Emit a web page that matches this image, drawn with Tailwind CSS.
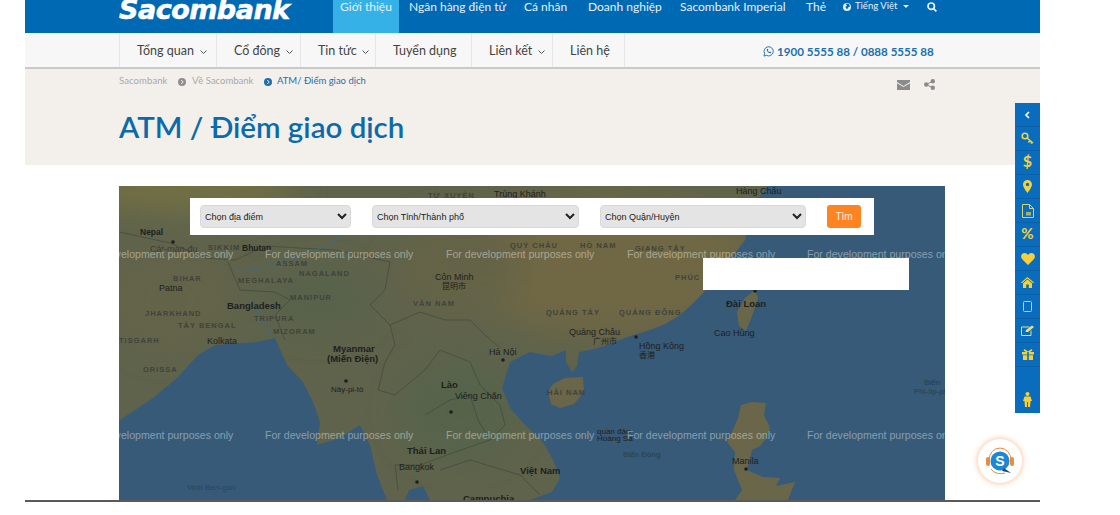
<!DOCTYPE html>
<html lang="vi">
  <head>
    <meta charset="UTF-8" />
    <meta name="viewport" content="width=device-width, initial-scale=1.0" />
    <title>ATM / Điểm giao dịch</title>
    <script src="https://cdn.jsdelivr.net/npm/@tailwindcss/browser@4"></script>
  </head>
  <body class="relative h-[515px] w-[1120px] overflow-hidden bg-white font-['Lato','Noto_Sans',sans-serif]">
    <div class="ml-[25px] w-[1015px]">
      <!-- top bar -->
      <header class="flex h-[33px] overflow-hidden whitespace-nowrap bg-[#0069b4] pl-[94px] text-[12px] text-[#e6f1f8]">
        <a class="-mt-[8px] w-[214px] font-['DejaVu_Sans',sans-serif] text-[27px] leading-[36px] font-bold tracking-[-0.5px] text-white italic [-webkit-text-stroke:0.6px_white]">Sacombank</a>
        <nav class="flex h-[33px]">
          <a class="w-[66px] bg-[#35b1e8] text-center leading-[13px]">Giới thiệu</a>
          <a class="ml-[10px] w-[98px] leading-[13px]">Ngân hàng điện tử</a>
          <a class="ml-[17px] w-[45px] leading-[13px]">Cá nhân</a>
          <a class="ml-[19px] w-[73px] leading-[13px]">Doanh nghiệp</a>
          <a class="ml-[19px] w-[107px] leading-[13px]">Sacombank Imperial</a>
          <a class="ml-[19px] w-[19px] leading-[13px]">Thẻ</a>
          <a class="ml-[18px] flex h-[13px] w-[66px] items-center text-[9.5px]">
            <svg class="mr-[4px] h-[8px] w-[8px] shrink-0" viewBox="0 0 10 10"><circle cx="5" cy="5" r="5" fill="#e6f1f8" /><path d="M3 1 5 3 3 5 5 8 7 5 9 4 7 1Z" fill="#0069b4" /></svg>
            Tiếng Việt
            <svg class="ml-[6px] h-[3px] w-[6px] shrink-0" viewBox="0 0 6 3"><path d="M0 0h6L3 3Z" fill="#e6f1f8" /></svg>
          </a>
          <a class="ml-[18px] flex h-[13px] items-center">
            <svg class="h-[10px] w-[10px]" viewBox="0 0 10 10" fill="none" stroke="#e6f1f8" stroke-width="1.7"><circle cx="4.2" cy="4.2" r="3.2" /><path d="m6.6 6.6 2.8 2.8" /></svg>
          </a>
        </nav>
      </header>

      <!-- sub nav -->
      <div class="flex h-[36px] items-stretch whitespace-nowrap border-b-2 border-[#c9c9c9] bg-[#f7f7f7] pl-[94px] text-[12.5px] text-[#444]">
        <a class="flex w-[97px] items-center gap-[6px] border-l border-[#e6e6e6] pt-[3px] pl-[17px]">Tổng quan <svg class="h-[4px] w-[7px]" viewBox="0 0 7 4" fill="none" stroke="#555"><path d="m.5.5 3 3 3-3" /></svg></a>
        <a class="flex w-[84px] items-center gap-[6px] border-l border-[#e6e6e6] pt-[3px] pl-[17px]">Cổ đông <svg class="h-[4px] w-[7px]" viewBox="0 0 7 4" fill="none" stroke="#555"><path d="m.5.5 3 3 3-3" /></svg></a>
        <a class="flex w-[75px] items-center gap-[5px] border-l border-[#e6e6e6] pt-[3px] pl-[17px]">Tin tức <svg class="h-[4px] w-[7px]" viewBox="0 0 7 4" fill="none" stroke="#555"><path d="m.5.5 3 3 3-3" /></svg></a>
        <a class="flex w-[96px] items-center border-l border-[#e6e6e6] pt-[3px] pl-[17px]">Tuyển dụng</a>
        <a class="flex w-[81px] items-center gap-[6px] border-l border-[#e6e6e6] pt-[3px] pl-[17px]">Liên kết <svg class="h-[4px] w-[7px]" viewBox="0 0 7 4" fill="none" stroke="#555"><path d="m.5.5 3 3 3-3" /></svg></a>
        <a class="flex w-[73px] items-center border-x border-[#e6e6e6] pt-[3px] pl-[17px]">Liên hệ</a>
        <div class="ml-[138px] flex items-center gap-[3px] pt-[3px] text-[11.6px] font-bold text-[#1c6fae]">
          <svg class="h-[11px] w-[11px]" viewBox="0 0 12 12" fill="none" stroke="#1c6fae"><path d="M1 11 1.8 8.2A5 5 0 1 1 3.8 10.2Z" /><path d="M4 3.5c0 2.5 2 4.5 4.5 4.5l.5-1.2-1.5-.8-.6.6C5.800 6.200 5.500 5.600 5.300 5l.6-.6L5.200 3Z" fill="#1c6fae" stroke="none" /></svg>
          1900 5555 88 / 0888 5555 88
        </div>
      </div>

      <!-- page title band -->
      <section class="h-[96px] whitespace-nowrap bg-[#f3f0eb] px-[94px] pt-[6px]">
        <div class="flex h-[13px] items-center text-[9.5px] text-[#a9a9a9]">
          <span class="w-[51px] tracking-[0.1px]">Sacombank</span>
          <svg class="ml-[8px] h-[8px] w-[8px]" viewBox="0 0 8 8"><circle cx="4" cy="4" r="4" fill="#8f8f8f" /><path d="m3.200 2 2 2-2 2" fill="none" stroke="#f3f0eb" /></svg>
          <span class="ml-[6px] w-[64px]">Về Sacombank</span>
          <svg class="ml-[8px] h-[8px] w-[8px]" viewBox="0 0 8 8"><circle cx="4" cy="4" r="4" fill="#1c6fae" /><path d="m3.200 2 2 2-2 2" fill="none" stroke="#f3f0eb" /></svg>
          <span class="ml-[5px] text-[#1c6fae]">ATM/ Điểm giao dịch</span>
          <svg class="mt-[6px] ml-auto h-[10px] w-[13px]" viewBox="0 0 13 10"><path d="M0 0h13v2L6.500 6 0 2Z" fill="#8b8b8b" /><path d="M0 3.200 6.500 7 13 3.200V10H0Z" fill="#8b8b8b" /></svg>
          <svg class="mt-[6px] mr-[11px] ml-[14px] h-[11px] w-[11px]" viewBox="0 0 11 11" fill="#8b8b8b"><circle cx="2.200" cy="5.500" r="2.200" /><circle cx="8.800" cy="2.200" r="2.200" /><circle cx="8.800" cy="8.800" r="2.200" /><path d="M2.200 5.500 8.800 2.200M2.200 5.500l6.600 3.300" stroke="#8b8b8b" /></svg>
        </div>
        <h1 class="mt-[19px] text-[29.5px] leading-[40px] font-semibold text-[#0a6aab]">ATM / Điểm giao dịch</h1>
      </section>

      <!-- map area -->
      <div class="px-[94px] pt-[21px]">
        <div class="relative h-[314px] w-[826px] overflow-hidden bg-[#365a78]">
          <svg class="absolute inset-0 h-full w-full" viewBox="119 186 826 314">
            <defs>
              <filter id="soft"><feGaussianBlur stdDeviation="16" /></filter>
              <filter id="edge"><feGaussianBlur stdDeviation=".5" /></filter>
              <clipPath id="landClip"><path d="M119 186H768L757 200 749 222 745 240 728 262 712 282 703 293 690 306 680 315 665 324 650 330 627 337 604 346 590 350 579 352 577 366 572 372 566 362 566 350 552 356 530 352 510 362 502 388 510 408 525 425 543 442 553 460 560 478 552 492 530 500H430L423 486 409 490 405 500H387L377 475 370 445 360 425 340 438 317 445 320 422 313 402 303 382 287 365 278 345 275 338 257 342 215 345 198 355 177 378 153 398 120 420 119 420Z" /></clipPath>
            </defs>
            <!-- land -->
            <g filter="url(#edge)">
              <path d="M119 186H768L757 200 749 222 745 240 728 262 712 282 703 293 690 306 680 315 665 324 650 330 627 337 604 346 590 350 579 352 577 366 572 372 566 362 566 350 552 356 530 352 510 362 502 388 510 408 525 425 543 442 553 460 560 478 552 492 530 500H430L423 486 409 490 405 500H387L377 475 370 445 360 425 340 438 317 445 320 422 313 402 303 382 287 365 278 345 275 338 257 342 215 345 198 355 177 378 153 398 120 420 119 420Z" fill="#5e634c" />
              <path d="M548 392 553 384 565 378 583 377 584 392 574 404 560 408 551 404Z" fill="#6b664a" />
              <path d="M755 290 758 298 752 316 746 331 739 326 737 312 745 298Z" fill="#6b664a" />
              <path d="M741 405 752 402 766 403 764 415 770 428 765 440 760 446 752 450 747 470 763 477 780 478 776 486 795 482 788 500H735L742 490 734 470 735 452 727 442 733 430 738 418Z" fill="#6b664a" />
            </g>
            <g clip-path="url(#landClip)">
              <g filter="url(#soft)">
                <ellipse cx="610" cy="265" rx="150" ry="70" fill="#6f6745" />
                <ellipse cx="190" cy="190" rx="110" ry="18" fill="#777243" />
                <ellipse cx="460" cy="265" rx="60" ry="50" fill="#656347" />
                <ellipse cx="320" cy="300" rx="50" ry="30" fill="#57624c" />
                <ellipse cx="460" cy="410" rx="60" ry="50" fill="#56634b" />
                <ellipse cx="170" cy="300" rx="60" ry="50" fill="#636348" />
              </g>
            </g>
            <!-- borders -->
            <g fill="none" stroke="#333c35" stroke-width=".6" stroke-opacity=".8">
              <path d="M119 232 170 243 205 258 235 260 265 246 335 250 390 262 385 290 370 305 390 325 420 312 445 320 470 320 485 335 500 348" />
              <path d="M228 262 240 290 275 292 290 300 275 315 285 340" />
              <path d="M390 325 395 345 385 362 378 390 395 395 425 370 440 350 470 362 480 385 500 405 505 425 490 440 455 452 420 465 395 465 398 490" />
              <path d="M425 415 450 400 470 395 478 420 490 440" />
              <path d="M440 470 470 460 520 475 540 495" />
            </g>
            <!-- rivers -->
            <g fill="none" stroke="#46687a" stroke-width="1.100">
              <path d="M238 270 270 267 330 245 345 232" />
              <path d="M250 300 262 320 272 337" />
            </g>
            <!-- labels -->
            <g font-family="'Liberation Sans',sans-serif" font-size="9" fill="#1d1f1e">
              <g font-weight="700">
                <text x="140" y="235" font-size="8.500">Nepal</text>
                <text x="242" y="251" font-size="8.500">Bhutan</text>
                <text x="227" y="309" font-size="9.500">Bangladesh</text>
                <text x="333" y="352" font-size="9.500">Myanmar</text>
                <text x="327" y="362" font-size="9.500">(Miến Điện)</text>
                <text x="441" y="388" font-size="9.500">Lào</text>
                <text x="407" y="454" font-size="9.500">Thái Lan</text>
                <text x="520" y="474" font-size="9.500">Việt Nam</text>
                <text x="726" y="307" font-size="9.500">Đài Loan</text>
              </g>
              <text x="494" y="197">Trùng Khánh</text>
              <text x="736" y="194">Hàng Châu</text>
              <text x="150" y="252" fill="#3a3d38">Cát-man-đu</text>
              <text x="159" y="291">Patna</text>
              <text x="207" y="344">Kolkata</text>
              <text x="435" y="280">Côn Minh</text>
              <text x="442" y="289" font-family="'Noto Sans CJK SC',sans-serif" font-size="8">昆明市</text>
              <text x="331" y="392" font-size="8">Nây-pi-tô</text>
              <text x="489" y="355">Hà Nội</text>
              <text x="455" y="399">Viêng Chăn</text>
              <text x="399" y="470">Bangkok</text>
              <text x="569" y="335">Quảng Châu</text>
              <text x="593" y="344" font-family="'Noto Sans CJK SC',sans-serif" font-size="8">广州市</text>
              <text x="639" y="349">Hồng Kông</text>
              <text x="639" y="358" font-family="'Noto Sans CJK SC',sans-serif" font-size="8">香港</text>
              <text x="714" y="336">Cao Hùng</text>
              <text x="732" y="464">Manila</text>
              <text x="463" y="502" font-weight="700" font-size="9.500">Campuchia</text>
              <text x="597" y="434" font-size="8">quần đảo</text>
              <text x="597" y="441" font-size="8">Hoàng Sa</text>
              <text x="623" y="457" font-size="8" fill="#26404f">Biển Đông</text>
              <text x="187" y="490" font-size="8" fill="#2b4660">Vịnh Ben-gan</text>
              <text x="924" y="385" font-size="8" fill="#26404f">Biển</text>
              <text x="914" y="394" font-size="8" fill="#26404f">Phi-líp-pin</text>
            </g>
            <g font-family="'Liberation Sans',sans-serif" font-size="7.500" font-weight="700" letter-spacing="1" fill="#3f433c">
              <text x="428" y="198">TỨ XUYÊN</text>
              <text x="173" y="281">BIHAR</text>
              <text x="238" y="283">MEGHALAYA</text>
              <text x="276" y="266">ASSAM</text>
              <text x="299" y="276">NAGALAND</text>
              <text x="290" y="300">MANIPUR</text>
              <text x="254" y="321">TRIPURA</text>
              <text x="273" y="334">MIZORAM</text>
              <text x="145" y="316">JHARKHAND</text>
              <text x="178" y="328">TÂY BENGAL</text>
              <text x="119" y="343">TISGARH</text>
              <text x="143" y="372">ORISSA</text>
              <text x="208" y="250">SIKKIM</text>
              <text x="413" y="306">VÂN NAM</text>
              <text x="510" y="248">QUÝ CHÂU</text>
              <text x="580" y="248">HỒ NAM</text>
              <text x="635" y="251">GIANG TÂY</text>
              <text x="675" y="280">PHÚC</text>
              <text x="546" y="315">QUẢNG TÂY</text>
              <text x="619" y="315">QUẢNG ĐÔNG</text>
              <text x="547" y="395">HẢI NAM</text>
            </g>
            <g fill="#1d1f1e">
              <circle cx="173" cy="242" r="1.800" /><circle cx="346" cy="381" r="1.800" /><circle cx="503" cy="360" r="1.800" /><circle cx="451" cy="412" r="1.800" /><circle cx="417" cy="482" r="1.800" /><circle cx="746" cy="469" r="1.800" /><circle cx="636" cy="337" r="1.800" /><circle cx="755" cy="291" r="1.800" />
            </g>
            <!-- dev watermark -->
            <g font-family="'Liberation Sans',sans-serif" font-size="10.600" fill="#fff" fill-opacity=".42">
              <text x="85" y="258">For development purposes only</text>
              <text x="265" y="258">For development purposes only</text>
              <text x="446" y="258">For development purposes only</text>
              <text x="627" y="258">For development purposes only</text>
              <text x="807" y="258">For development purposes only</text>
              <text x="85" y="439">For development purposes only</text>
              <text x="265" y="439">For development purposes only</text>
              <text x="446" y="439">For development purposes only</text>
              <text x="627" y="439">For development purposes only</text>
              <text x="807" y="439">For development purposes only</text>
            </g>
          </svg>

          <!-- search box on the map -->
          <form class="absolute top-[12px] left-[71px] flex h-[37px] w-[684px] items-center bg-white pl-[10px] font-['Liberation_Sans',sans-serif] text-[9px] text-[#222]">
            <select class="h-[23px] w-[151px] rounded-[4px] border border-[#d8d8d8] bg-[#e4e4e4]"><option>Chọn địa điểm</option></select>
            <select class="ml-[21px] h-[23px] w-[207px] rounded-[4px] border border-[#d8d8d8] bg-[#e4e4e4]"><option>Chọn Tỉnh/Thành phố</option></select>
            <select class="ml-[21px] h-[23px] w-[206px] rounded-[4px] border border-[#d8d8d8] bg-[#e4e4e4]"><option>Chọn Quận/Huyện</option></select>
            <button type="button" class="ml-[21px] h-[23px] w-[34px] rounded-[3px] bg-[#fd8421] text-[10px] text-[#fff3e6]">Tìm</button>
          </form>
          <!-- empty info window -->
          <div class="absolute top-[72px] left-[584px] h-[32px] w-[206px] bg-white"></div>
        </div>
      </div>
      <div class="h-[2px] bg-[#5a5a5a]"></div>
    </div>

    <!-- floating side menu -->
    <aside class="absolute top-[103px] left-[1015px] flex h-[310px] w-[25px] flex-col bg-[#0a6cbd]">
      <div class="flex h-[24px] items-center justify-center border-b border-[#0a5fa6]"><svg class="h-[8px] w-[5px]" viewBox="0 0 5 8" fill="none" stroke="#fff" stroke-width="1.600"><path d="M4 1 1 4l3 3" /></svg></div>
      <div class="flex h-[24px] items-center justify-center border-b border-[#0a5fa6]"><svg class="h-[13px] w-[13px]" viewBox="0 0 13 13" fill="none" stroke="#e8d44d" stroke-width="1.600"><circle cx="4" cy="4" r="2.800" /><path d="m6 6 6 5M9 8.500l-1.500 2M11 10l-1 1.500" /></svg></div>
      <div class="flex h-[24px] items-center justify-center border-b border-[#0a5fa6] pb-[3px] text-[16px] font-bold text-[#f2d23c]">$</div>
      <div class="flex h-[24px] items-center justify-center border-b border-[#0a5fa6]"><svg class="h-[13px] w-[9px]" viewBox="0 0 9 13"><path fill-rule="evenodd" d="M4.500 0A4.500 4.500 0 0 1 9 4.500C9 7.500 4.500 13 4.500 13S0 7.500 0 4.500A4.500 4.500 0 0 1 4.500 0Zm0 2.800a1.700 1.700 0 1 0 0 3.400 1.700 1.700 0 0 0 0-3.400Z" fill="#f2d23c" /></svg></div>
      <div class="flex h-[24px] items-center justify-center border-b border-[#0a5fa6]"><svg class="h-[14px] w-[12px]" viewBox="0 0 12 14" fill="none" stroke="#d8d46a"><path d="M.5.500h7l4 4v9H.5Z" /><path d="M7.500.500v4h4" /><path d="M4 8h5v3.500H4Z" fill="#a9b06a" stroke="none" /></svg></div>
      <div class="flex h-[24px] items-center justify-center border-b border-[#0a5fa6] pb-[3px] text-[15px] font-bold text-[#f2d23c]">%</div>
      <div class="flex h-[24px] items-center justify-center border-b border-[#0a5fa6]"><svg class="h-[12px] w-[14px]" viewBox="0 0 14 12"><path d="M7 12 1 6C-1 3.500.5 0 3.500 0 5 0 6.300.8 7 2 7.700.8 9 0 10.500 0 13.500 0 15 3.500 13 6Z" fill="#f6cf3a" /></svg></div>
      <div class="flex h-[24px] items-center justify-center border-b border-[#0a5fa6]"><svg class="h-[11px] w-[13px]" viewBox="0 0 13 11"><path d="M6.500 0 13 5.500l-.8.8L6.500 1.500.8 6.300 0 5.500ZM2 6.200 6.500 2.500 11 6.200V11H7.800V7.500H5.200V11H2Z" fill="#f2d23c" /></svg></div>
      <div class="flex h-[24px] items-center justify-center border-b border-[#0a5fa6]"><svg class="h-[11px] w-[9px]" viewBox="0 0 9 11" fill="none" stroke="#d8d46a"><rect x=".5" y=".5" width="8" height="10" rx="1" /></svg></div>
      <div class="flex h-[24px] items-center justify-center border-b border-[#0a5fa6]"><svg class="h-[11px] w-[14px]" viewBox="0 0 14 11" fill="none" stroke="#e8e07a"><path d="M10 5.500V10.500H.5V2h8" /><path d="M4.500 7 5 5 11 .5l2 1.500-6 5Z" fill="#e8e07a" stroke="none" /></svg></div>
      <div class="flex h-[24px] items-center justify-center border-b border-[#0a5fa6]"><svg class="h-[11px] w-[12px]" viewBox="0 0 12 11"><path d="M0 3h5.200v2.500H0ZM6.800 3H12v2.500H6.800ZM1 6.200h4.200V11H1ZM6.800 6.200H11V11H6.800ZM2.500 0 6 2.500 9.500 0l1 1.500L8 3H4L1.500 1.500Z" fill="#f2d23c" /></svg></div>
      <div class="flex flex-1 items-end justify-center pb-[6px]"><svg class="h-[15px] w-[9px]" viewBox="0 0 9 15"><circle cx="4.500" cy="2" r="2" fill="#f6cf3a" /><path d="M1.500 4.500h6L9 9H7.500l-.5 6H5V10H4v5H2L1.500 9H0Z" fill="#f6cf3a" /></svg></div>
    </aside>

    <!-- chat bubble -->
    <div class="absolute top-[439px] left-[978px] flex h-[44px] w-[44px] items-center justify-center rounded-full bg-white shadow-[0_0_6px_#f5b78a]">
      <svg class="h-[32px] w-[28px]" viewBox="0 0 28 32">
        <path d="M3 15a11 12 0 0 1 22 0" fill="none" stroke="#ee8a3c" />
        <path d="M5 24a11 9 0 0 0 14 4" fill="none" stroke="#ee8a3c" />
        <rect x="0" y="12" width="4" height="9" rx="2" fill="#ee8a3c" />
        <rect x="24" y="12" width="4" height="9" rx="2" fill="#ee8a3c" />
        <circle cx="14" cy="16" r="9.500" fill="#1b87d6" />
        <path d="M18 23 25 28 16 26Z" fill="#16527f" />
        <text x="14" y="21" text-anchor="middle" font-family="'Liberation Sans',sans-serif" font-size="14" font-weight="700" fill="#fff">S</text>
      </svg>
    </div>
  </body>
</html>
